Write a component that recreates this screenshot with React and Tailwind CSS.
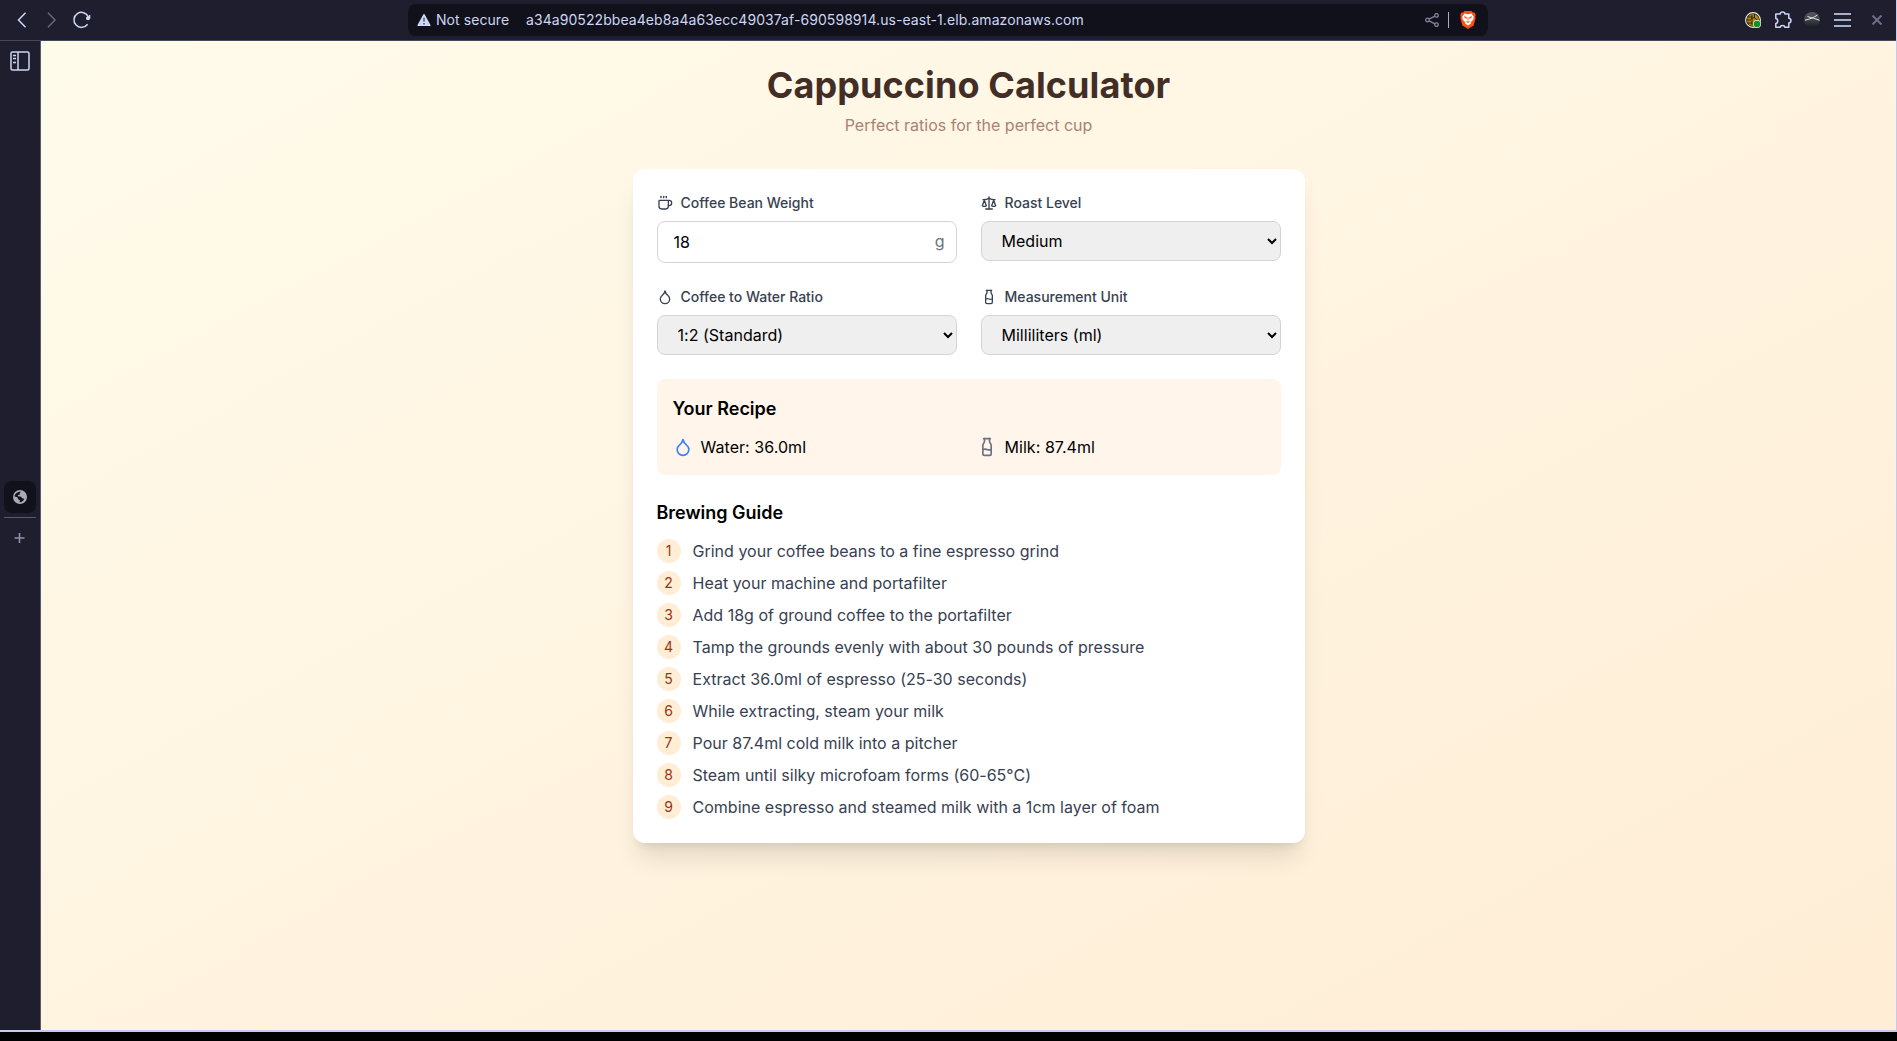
import React from "react";
import { Coffee, Scale, Droplet, Milk } from "lucide-react";

const steps = [
  "Grind your coffee beans to a fine espresso grind",
  "Heat your machine and portafilter",
  "Add 18g of ground coffee to the portafilter",
  "Tamp the grounds evenly with about 30 pounds of pressure",
  "Extract 36.0ml of espresso (25-30 seconds)",
  "While extracting, steam your milk",
  "Pour 87.4ml cold milk into a pitcher",
  "Steam until silky microfoam forms (60-65°C)",
  "Combine espresso and steamed milk with a 1cm layer of foam",
];

function Field({ icon: Icon, label, children }) {
  return (
    <div>
      <label className="mb-2 flex items-center gap-2 text-sm font-medium text-[#374151]">
        <Icon size={16} />
        {label}
      </label>
      {children}
    </div>
  );
}

function Select({ value }) {
  return (
    <select
      defaultValue={value}
      className="block w-full rounded-lg border border-[#d1d5db] bg-[#efefef] px-4 py-2 text-base leading-normal tracking-[0.02px] text-black"
    >
      <option>{value}</option>
    </select>
  );
}

function Toolbar() {
  return (
    <header className="flex h-[41px] shrink-0 items-center border-b border-[#45475a] bg-[#1e1e2e] text-[#cdd6f4]">
      <div className="flex w-[408px] shrink-0 items-center pl-[13px]">
        <svg width="18" height="20" viewBox="0 0 18 20" fill="none" stroke="#cdd6f4" strokeWidth="1.5">
          <path d="M12.5 2.8 5.5 10l7 7.2" />
        </svg>
        <svg className="ml-3" width="18" height="20" viewBox="0 0 18 20" fill="none" stroke="#666878" strokeWidth="1.5">
          <path d="M5 2.8 12 10l-7 7.2" />
        </svg>
        <svg className="ml-[11px]" width="20" height="20" viewBox="0 0 20 20" fill="none" stroke="#cdd6f4" strokeWidth="1.5">
          <path d="M16.4 7A7.5 7.5 0 1 0 15.6 14.2" />
          <circle cx="16" cy="8.3" r="2" fill="#cdd6f4" stroke="none" />
          <path d="M17.600 5v3.500" />
        </svg>
      </div>
      <div className="flex h-8 w-[1080px] shrink-0 items-center rounded-lg bg-[#11111b] text-sm tracking-[0.07px]">
        <svg className="ml-[9px]" width="14" height="12" viewBox="0 0 14 12">
          <path d="M7 0.6 13 11.4H1z" fill="#cdd6f4" stroke="#cdd6f4" strokeWidth="1.2" strokeLinejoin="round" />
          <path d="M7 3.8v3.7M7 9v1.4" stroke="#5b6078" strokeWidth="1.6" />
        </svg>
        <span className="ml-[5px] w-[90px]">Not secure</span>
        <span className="grow">a34a90522bbea4eb8a4a63ecc49037af-690598914.us-east-1.elb.amazonaws.com</span>
        <svg width="14" height="14" viewBox="0 0 14 14" fill="none" stroke="#7f849c" strokeWidth="1.3">
          <circle cx="2.5" cy="7" r="1.8" />
          <circle cx="11.5" cy="2.4" r="1.8" />
          <circle cx="11.5" cy="11.6" r="1.8" />
          <path d="m4.1 6.2 5.8-3M4.1 7.8l5.8 3" />
        </svg>
        <span className="ml-[9px] h-4 w-px bg-[#a6adc8]" />
        <svg className="mr-3 ml-[11px]" width="16" height="18" viewBox="0 0 16 18">
          <path d="M4.5 0h7l1.5 1.500 1.600-.1 1.100 2.600-.4 2.300.3 1-2 7.300L8 18l-5.600-3.400-2-7.300.3-1L.3 4l1.100-2.600 1.600.1z" fill="#fb4f14" />
          <path d="M4.500 2.600 8 3.200l3.500-.6 2.300 3.100-.5 2.700-2.500 2.900.2 1.100L8 14.600l-3-2.200.2-1.100-2.500-2.900-.5-2.700z" fill="#fff" />
          <path d="m4.3 5.800 2.200.6-.3 1.100zM11.700 5.800l-2.200.6.3 1.100zM8 6.500v3M6.300 10.500l1.700.9 1.700-.9" fill="#fb4f14" stroke="#fb4f14" strokeWidth=".8" />
        </svg>
      </div>
      <div className="ml-auto flex items-center pr-[14px]">
        <svg width="16" height="16" viewBox="0 0 16 16">
          <circle cx="8" cy="8" r="7.4" fill="#1c1708" stroke="#f3f0e6" strokeWidth="1.1" />
          <circle cx="8" cy="8" r="6" fill="#b58a13" />
          <path d="M2 8h4M3 5h4M3 11h4M7 3v10M9.500 2v4l3 2M6 7l4-2" stroke="#2a2108" strokeWidth="1" fill="none" />
          <circle cx="12" cy="12" r="4" fill="#f3f0e6" />
          <circle cx="12" cy="12" r="3.3" fill="#0f9226" />
        </svg>
        <svg className="ml-[13px]" width="18" height="18" viewBox="0 0 18 18" fill="none" stroke="#cdd6f4" strokeWidth="1.5" strokeLinejoin="round">
          <path d="M1.800 3H6.300C6.300.2 10.900.2 10.900 3h3.900v4.200c2.900.2 2.900 4.600 0 4.800v4.300h-4c-.2-2.300-4.300-2.300-4.500 0H1.800v-3.900c2.600-.3 2.600-4.600 0-5z" />
        </svg>
        <svg className="ml-3" width="16" height="16" viewBox="0 0 16 16">
          <defs>
            <linearGradient id="orb" x1="0" y1="0" x2="0" y2="1">
              <stop offset="0" stopColor="#555a5e" />
              <stop offset=".5" stopColor="#3c4246" />
              <stop offset="1" stopColor="#15191c" />
            </linearGradient>
          </defs>
          <circle cx="8" cy="8" r="8" fill="url(#orb)" />
          <path d="M1 8.200c4-.7 9-2.700 12.500-5.200M3.500 4.500c4 1 8 2.500 12 3.700" fill="none" stroke="#e8e8e8" strokeWidth="1" />
        </svg>
        <svg className="ml-[14px]" width="17" height="14" viewBox="0 0 17 14" fill="#a6b0cc">
          <rect width="17" height="2" />
          <rect y="6" width="17" height="2" />
          <rect y="12" width="17" height="2" />
        </svg>
        <svg className="ml-[21px]" width="10" height="10" viewBox="0 0 10 10" stroke="#6c7086" strokeWidth="2">
          <path d="m.5.5 9 9m0-9-9 9" />
        </svg>
      </div>
    </header>
  );
}

function Sidebar() {
  return (
    <aside className="flex w-[41px] shrink-0 flex-col items-center border-r border-[#585b70] bg-[#1e1e2e]">
      <svg className="mt-[10px]" width="20" height="20" viewBox="0 0 20 20" fill="none" stroke="#cdd6f4" strokeWidth="1.5">
        <rect x="1" y="1" width="18" height="18" rx="1.500" />
        <path d="M8 1v18M3 4.500h3M3 7.500h3M3 11.500h3" />
      </svg>
      <div className="mt-[410px] flex size-8 items-center justify-center rounded-lg bg-[#11111b]">
        <svg width="14" height="14" viewBox="0 0 14 14">
          <circle cx="7" cy="7" r="7" fill="#a9acb5" />
          <path d="M1.600 6.400C2 3 5 1.500 8 1.700L6.600 3.200 7 4.600 4.900 5.100l-.1 1.200 3.400.5.8 1.500 2.300.5C10.500 11 8.800 12.400 6.500 12.300L7 10.200 5 9.200 4.800 7.400z" fill="#11111b" />
        </svg>
      </div>
      <div className="mt-1 h-px w-8 bg-[#585b70]" />
      <svg className="mt-[15px] mr-px" width="11" height="11" viewBox="0 0 11 11" stroke="#8c92ab" strokeWidth="1.6">
        <path d="M5.500 0v10M.5 5h10" />
      </svg>
    </aside>
  );
}

export default function App() {
  return (
    <div className="h-[1041px] w-[1897px] overflow-hidden bg-black font-['Inter',sans-serif]">
      <div className="flex h-[1032px] flex-col border-r border-b-2 border-[#c3cbf0]">
        <Toolbar />
        <div className="flex min-h-0 grow">
          <Sidebar />
          <main className="grow bg-linear-to-br/srgb from-[#fffbeb] to-[#ffedd5] p-6">
            <div className="mx-auto max-w-2xl">
              <div className="mb-8 text-center">
                <h1 className="mb-2 text-4xl font-bold tracking-[0.1px] text-[#432e27]">Cappuccino Calculator</h1>
                <p className="text-[#a98274]">Perfect ratios for the perfect cup</p>
              </div>
              <div className="rounded-xl bg-white p-6 shadow-xl">
                <div className="mb-6 grid grid-cols-2 gap-6">
                  <Field icon={Coffee} label="Coffee Bean Weight">
                    <div className="relative">
                      <input
                        defaultValue="18"
                        className="block w-full rounded-lg border border-[#d1d5db] px-4 py-2 text-black"
                      />
                      <span className="absolute top-2 right-3 text-[#6b7280]">g</span>
                    </div>
                  </Field>
                  <Field icon={Scale} label="Roast Level">
                    <Select value="Medium" />
                  </Field>
                  <Field icon={Droplet} label="Coffee to Water Ratio">
                    <Select value="1:2 (Standard)" />
                  </Field>
                  <Field icon={Milk} label="Measurement Unit">
                    <Select value="Milliliters (ml)" />
                  </Field>
                </div>
                <section className="mb-6 rounded-lg bg-[#fff5eb] p-4">
                  <h2 className="mb-3 text-lg font-semibold text-black">Your Recipe</h2>
                  <div className="grid grid-cols-2 gap-4">
                    <div className="flex items-center gap-2">
                      <Droplet size={20} className="text-[#3b82f6]" />
                      <span className="tracking-[0.05px]">Water: 36.0ml</span>
                    </div>
                    <div className="flex items-center gap-2">
                      <Milk size={20} className="text-[#6b7280]" />
                      <span className="tracking-[0.05px]">Milk: 87.4ml</span>
                    </div>
                  </div>
                </section>
                <h2 className="mb-3 text-lg font-semibold text-black">Brewing Guide</h2>
                <ol className="space-y-2">
                  {steps.map((step, i) => (
                    <li key={step} className="flex items-start gap-3">
                      <span className="flex size-6 shrink-0 items-center justify-center rounded-full bg-[#ffedd5] text-sm text-[#9a3412]">
                        {i + 1}
                      </span>
                      <span className="tracking-[0.01px] text-[#374151]">{step}</span>
                    </li>
                  ))}
                </ol>
              </div>
            </div>
          </main>
        </div>
      </div>
    </div>
  );
}
